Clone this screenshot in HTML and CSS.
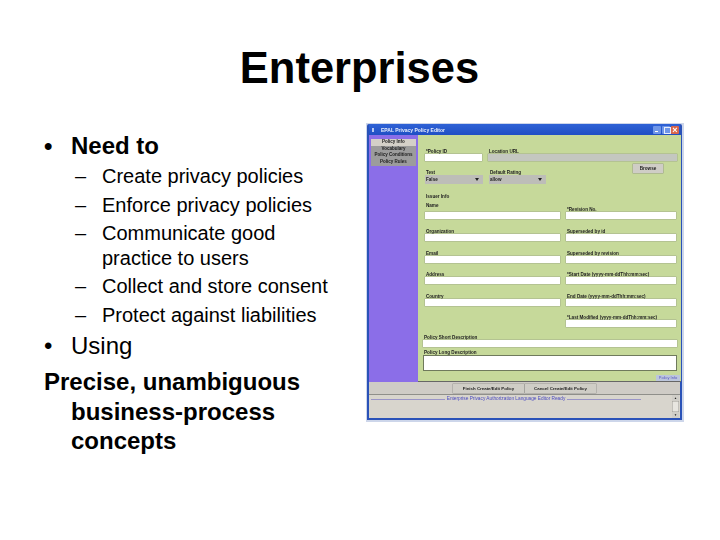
FILE: index.html
```html
<!DOCTYPE html>
<html lang="en">
<head>
<meta charset="utf-8">
<title>Enterprises</title>
<link rel="stylesheet" href="styles.css">
</head>
<body>
<main class="slide">
  <h1 class="title">Enterprises</h1>
  <div class="columns">
    <div class="text">
      <p class="l1"><span class="dot">•</span>Need to</p>
      <ul class="subs">
        <li><span class="dash">–</span><span>Create privacy policies</span></li>
        <li><span class="dash">–</span><span>Enforce privacy policies</span></li>
        <li><span class="dash">–</span><span>Communicate good<br>practice to users</span></li>
        <li><span class="dash">–</span><span>Collect and store consent</span></li>
        <li><span class="dash">–</span><span>Protect against liabilities</span></li>
      </ul>
      <p class="l1 using"><span class="dot">•</span>Using</p>
      <p class="l1b">Precise, unambiguous<br><span class="ind">business-process</span><br><span class="ind">concepts</span></p>
    </div>
    <div class="shot">
      <div class="win">
        <div class="titlebar">
          <span class="wi"></span>
          <span class="wt">EPAL Privacy Policy Editor</span>
          <span class="wb min"></span><span class="wb max"></span><span class="wb close">×</span>
        </div>
        <div class="body">
          <nav class="side">
            <div class="tab on">Policy Info</div>
            <div class="tab">Vocabulary</div>
            <div class="tab">Policy Conditions</div>
            <div class="tab">Policy Rules</div>
          </nav>
          <div class="pane">
            <div class="r r1">
              <div class="f w57"><label>*Policy ID</label><i class="in"></i></div>
              <div class="f w189"><label>Location URL</label><i class="in dis"></i></div>
            </div>
            <div class="browse-row"><span class="btn browse">Browse</span></div>
            <div class="r r2">
              <div class="f w58"><label>Test</label><span class="sel">False<b></b></span></div>
              <div class="f w57"><label>Default Rating</label><span class="sel">allow<b></b></span></div>
            </div>
            <div class="issuer">Issuer Info</div>
            <div class="two name">
              <div class="f top"><label>Name</label><i class="in"></i></div>
              <div class="f"><label>*Revision No.</label><i class="in"></i></div>
            </div>
            <div class="two org">
              <div class="f"><label>Organization</label><i class="in"></i></div>
              <div class="f"><label>Superseded by id</label><i class="in"></i></div>
            </div>
            <div class="two">
              <div class="f"><label>Email</label><i class="in"></i></div>
              <div class="f"><label>Superseded by revision</label><i class="in"></i></div>
            </div>
            <div class="two">
              <div class="f"><label>Address</label><i class="in"></i></div>
              <div class="f"><label>*Start Date (yyyy-mm-ddThh:mm:sec)</label><i class="in"></i></div>
            </div>
            <div class="two">
              <div class="f"><label>Country</label><i class="in"></i></div>
              <div class="f"><label>End Date (yyyy-mm-ddThh:mm:sec)</label><i class="in"></i></div>
            </div>
            <div class="two">
              <div class="f"></div>
              <div class="f"><label>*Last Modified (yyyy-mm-ddThh:mm:sec)</label><i class="in"></i></div>
            </div>
            <div class="f wide short"><label>Policy Short Description</label><i class="in"></i></div>
            <div class="f wide long"><label>Policy Long Description</label><i class="in area"></i></div>
            <div class="foot"><span class="pi">Policy Info</span></div>
          </div>
        </div>
        <div class="bottom">
          <div class="btns"><span class="btn fin">Finish Create/Edit Policy</span><span class="btn fin">Cancel Create/Edit Policy</span></div>
          <div class="log">
            <div class="logline"><span>Enterprise Privacy Authorization Language Editor Ready</span></div>
            <div class="scroll"><span class="arr">▲</span><span class="thumb"></span><span class="arr">▼</span></div>
          </div>
        </div>
      </div>
    </div>
  </div>
</main>
</body>
</html>
```
FILE: styles.css
```css
* { box-sizing: border-box; }
html, body { margin: 0; padding: 0; background: #fff; }
body { width: 720px; height: 540px; overflow: hidden; font-family: "Liberation Sans", Arial, sans-serif; color: #000; }
.slide { padding-top: 41px; }
.title { margin: 0 0 0 -1px; height: 56px; font-size: 43.5px; line-height: 54px; font-weight: 700; text-align: center; }
.columns { display: flex; margin-top: 26px; }
.text { width: 366px; flex: none; padding-left: 44px; padding-top: 9px; }
.l1 { margin: 0; font-size: 24px; line-height: 28px; font-weight: 700; }
.dot { display: inline-block; width: 27px; }
.subs { list-style: none; margin: 4px 0 0 31px; padding: 0; font-size: 20px; line-height: 24.2px; }
.subs li { display: flex; margin-bottom: 4.5px; }
.subs li:last-child { margin-bottom: 0; }
.dash { width: 27px; flex: none; }
.using { margin-top: 5px; font-weight: 400; }
.l1b { margin: 7px 0 0; font-size: 24px; line-height: 29.3px; font-weight: 700; }
.ind { margin-left: 27px; }

.shot { width: 318px; height: 299px; padding: 1px 2px 2px 1px; background: #cdd6ea; flex: none; }
.win { height: 100%; background: #2a52b8; padding: 0 2px 2px; display: flex; flex-direction: column; filter: blur(.6px); border-radius: 2px 2px 0 0; font-weight: 700; color: #222; font-size: 4.6px; }
.titlebar { height: 11px; flex: none; display: flex; align-items: center; gap: 1px; padding: 0 1px 0 3px; background: linear-gradient(#2f62d6, #1f4fc4); color: #e8eefc; font-size: 5px; }
.wi { width: 2px; height: 4px; margin-right: 6px; background: #b9c8f0; }
.wt { flex: 1; }
.wb { position: relative; width: 8px; height: 8px; background: #6f96e8; border-radius: 1px; }
.min::after { content: ""; position: absolute; left: 1.5px; bottom: 1.5px; width: 3px; height: 1px; background: #fff; }
.max::after { content: ""; position: absolute; left: 1.5px; top: 1.5px; width: 5px; height: 5px; border: 1px solid #e6ecfb; }
.close { background: #d9664a; color: #fff; font-size: 9px; line-height: 8px; text-align: center; }
.body { height: 247px; flex: none; display: flex; background: #8b6ee8; }
.side { width: 48px; flex: none; padding: 4px 1px 0 2px; }
.tab { height: 6.7px; background: #9c9c9c; color: #1c1c1c; font-size: 4.5px; line-height: 6.7px; text-align: center; white-space: nowrap; }
.tab.on { background: #d4d0c8; }
.pane { flex: 1; background: #c6d99a; padding: 14px 4px 0 5px; margin-left: 1px; display: flex; flex-direction: column; border-bottom: 1px solid #666; }
.f { display: flex; flex-direction: column; min-width: 0; }
label { height: 5px; line-height: 5px; white-space: nowrap; padding-left: 1px; }
.in { display: block; height: 7px; background: #fff; box-shadow: 0 0 0 .4px #9aa388; }
.in.dis { background: #c4c7c0; }
.r { display: flex; gap: 6px; padding-left: 2px; }
.w57 { width: 57px; }
.w58 { width: 58px; }
.w189 { width: 189px; }
.browse-row { display: flex; justify-content: flex-end; height: 9px; margin-top: 3px; padding-right: 14px; }
.btn { display: flex; align-items: center; justify-content: center; background: #cfcdc6; box-shadow: 0 0 0 .4px #8d8d88; white-space: nowrap; }
.browse { width: 30px; }
.r2 { margin-top: -3px; }
.sel { display: flex; justify-content: space-between; align-items: center; height: 9px; padding: 0 4px 0 1px; background: #bdbdb8; }
.sel b { border: 2px solid transparent; border-top: 3px solid #222; border-bottom: 0; }
.issuer { padding-left: 3px; height: 5px; line-height: 5px; margin-top: 10px; }
.two { display: grid; grid-template-columns: 135px 110px; gap: 6px; padding-left: 2px; margin-top: 9.6px; align-items: stretch; height: 12px; }
.two.name { margin-top: 4.3px; height: 15.5px; }
.two.org { margin-top: 10.3px; }
.two .f { justify-content: flex-end; }
.two .f.top { justify-content: space-between; }
.short { margin-top: 7.5px; }
.long { margin-top: 3px; }
.in.area { height: 16px; box-shadow: inset 0 0 0 1px #6f7a5c; }
.foot { display: flex; justify-content: flex-end; margin-top: auto; margin-right: -3px; }
.pi { width: 24px; height: 6px; line-height: 6px; text-align: center; background: #bcc6dc; color: #5a5ac0; font-weight: 400; font-size: 4px; }
.bottom { flex: 1; display: flex; flex-direction: column; background: #cfccc6; font-size: 4.4px; }
.btns { height: 12px; flex: none; display: flex; justify-content: center; gap: 1px; padding: 2px 0 0 0; }
.fin { width: 71px; height: 9px; }
.log { flex: 1; display: flex; background: #d8d5cd; box-shadow: inset 0 1px 0 #8f8f8a; padding-left: 2px; }
.logline { flex: 1; height: 7px; margin-top: 2px; display: flex; justify-content: center; margin-right: 31px; background: linear-gradient(#0000 2.5px, #9a95c8 2.5px, #9a95c8 3.5px, #0000 3.5px); }
.logline span { background: #d8d5cd; color: #4a4ac0; font-weight: 400; padding: 0 2px; line-height: 6px; height: 6px; white-space: nowrap; font-size: 4.75px; }
.scroll { width: 7px; flex: none; display: flex; flex-direction: column; background: #e8e6e0; margin: 1px 1px 0 0; }
.arr { height: 6px; line-height: 6px; font-size: 3px; text-align: center; color: #222; background: #d0cec8; }
.thumb { flex: 1; box-shadow: inset 0 0 0 .5px #9c9a94; }
```
